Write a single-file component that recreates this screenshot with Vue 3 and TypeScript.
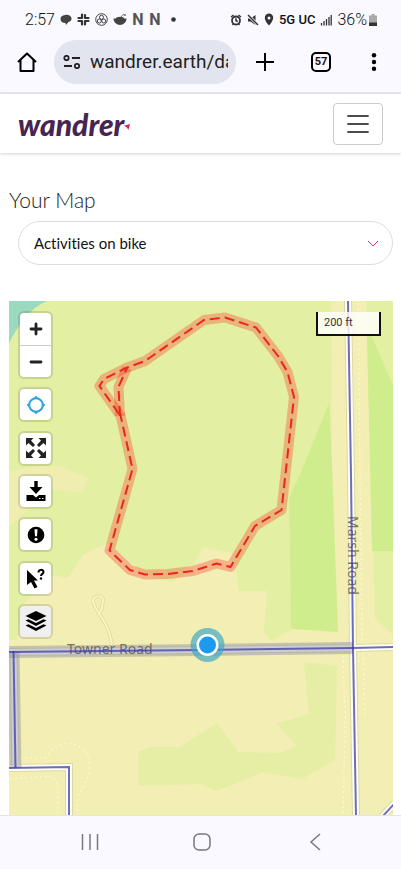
<script setup lang="ts">
import { ref } from 'vue'

interface Control {
  id: string
  label: string
}

const address = ref('wandrer.earth/dashboard')
const activity = ref('bike')
const activeControl = ref('layers')

const controls: Control[] = [
  { id: 'locate', label: 'Show my location' },
  { id: 'expand', label: 'Full screen' },
  { id: 'download', label: 'Download' },
  { id: 'report', label: 'Report a problem' },
  { id: 'query', label: 'Query the map' },
  { id: 'layers', label: 'Layers' },
]

const marsh = 'M348 301 L351 475 L353 648 L356 816'
const towner = 'M9 652 L200 650 L353 648 L394 647'
const west = 'M13.5 651 L15.5 768'
const south = 'M9 768 L69 767 L69 816'
const corner = 'M382 817 L395 803'
const roads = [marsh, towner, west, south, corner]

const route =
  'M119 414 L99.5 386 L104 379 L126 368 L145 361 L204 320 L225 317.5 L256 327.5 L278 356 L287.5 372 L294 397 L281.5 510 L255 526 L230.500 567 L216.500 563.500 L193 571 L168 574 L145 574.500 L130 570 L109.500 550.500 L132.500 469 L120 413'
const spur = 'M120 416 L118.500 387 L127 368'
</script>

<template>
  <div class="screen">
    <header class="status">
      <div class="status-left">
        <span class="clock">2:57</span>
        <svg width="12" height="12" viewBox="0 0 12 12"><path d="M5 1c3-1 6 .5 6.500 3 .4 2-1 3.500-3 4L6 11 5.500 9C2.500 9 .5 7.500.5 5S2 1.500 5 1z" fill="#444" /></svg>
        <svg width="13" height="13" viewBox="0 0 13 13" stroke="#333" stroke-width="2.200" stroke-linecap="round" fill="none"><path d="M5 1.500V5M1.500 5H5M8 2V5M8 5h3.500M5 8v3.500M1.500 8H5M8 8h3.500M8 8v3.500" /></svg>
        <svg width="13" height="13" viewBox="0 0 13 13" stroke="#444" fill="none"><circle cx="6.500" cy="6.500" r="5.800" /><circle cx="6.500" cy="4.300" r="2" /><circle cx="4.300" cy="8" r="2" /><circle cx="8.700" cy="8" r="2" /></svg>
        <svg width="14" height="13" viewBox="0 0 14 13"><path d="M.5 5.500h13c0 3.500-3 6.500-6.500 6.500s-6.500-3-6.500-6.500z" fill="#444" /><ellipse cx="7" cy="5.500" rx="4" ry="1.800" fill="#444" /><path d="M8 4l2-2.500 2 .5" stroke="#777" fill="none" /><circle cx="12" cy="2" r="1" fill="#777" /></svg>
        <span class="letter">N</span>
        <span class="letter">N</span>
        <svg width="5" height="5" viewBox="0 0 5 5"><circle cx="2.500" cy="2.500" r="2.300" fill="#333" /></svg>
      </div>
      <div class="status-right">
        <svg width="12" height="12" viewBox="0 0 12 12" fill="none" stroke="#333"><circle cx="6" cy="6.500" r="4" stroke-width="1.800" /><path d="M1 3l2.500-2M11 3L8.500 1M6 4.200v2.500l1.800.8M2.500 11l1-1M9.500 11l-1-1" stroke-width="1.500" /></svg>
        <svg width="12" height="12" viewBox="0 0 12 12"><path d="M1 4.500h2.500L8.500 1v10l-5-3.500H1z" fill="#333" /><path d="M1 1l10 10" stroke="#f9f9ff" stroke-width="3" /><path d="M1 1l10 10" stroke="#333" stroke-width="1.400" /></svg>
        <svg width="10" height="13" viewBox="0 0 10 13"><path d="M5 .5a4.200 4.200 0 0 1 4.200 4.200C9.200 8 5 12.500 5 12.500S.8 8 .8 4.700A4.200 4.200 0 0 1 5 .5zm0 2.900a1.500 1.500 0 1 0 0 3 1.500 1.500 0 0 0 0-3z" fill="#333" fill-rule="evenodd" /></svg>
        <span class="network">5G UC</span>
        <svg width="12" height="12" viewBox="0 0 12 12" stroke="#333" stroke-width="1.300"><path d="M1.500 9v2.500M4 7v4.500M6.500 5v6.500M9 3v8.500M11.200 1v10.500" /></svg>
        <span class="percent">36%</span>
        <svg width="8" height="12" viewBox="0 0 8 12"><path d="M2.500 0h3v1.500H8V12H0V1.500h2.500z" fill="#aaa" /><path d="M0 8.500h8V12H0z" fill="#333" /></svg>
      </div>
    </header>

    <div class="toolbar">
      <button class="plain" aria-label="Home">
        <svg width="20" height="20" viewBox="0 0 20 20" fill="none" stroke="#000" stroke-width="2"><path d="M1 10 10 1.500 19 10M3.500 8v11h13V8" stroke-linejoin="round" /></svg>
      </button>
      <label class="address">
        <svg width="18" height="14" viewBox="0 0 18 14" fill="none" stroke="#222" stroke-width="1.800"><circle cx="3.500" cy="3" r="2.200" /><path d="M9 3h8M1 11h8" /><circle cx="14" cy="11" r="2.200" /></svg>
        <input v-model="address" type="text" aria-label="Address" />
      </label>
      <div class="actions">
        <button class="plain" aria-label="New tab">
          <svg width="18" height="18" viewBox="0 0 18 18" stroke="#000" stroke-width="2"><path d="M0 9h18M9 0v18" /></svg>
        </button>
        <button class="tabs" aria-label="Open tabs">57</button>
        <button class="plain" aria-label="More">
          <svg width="12" height="18" viewBox="0 0 12 18"><circle cx="6" cy="2.300" r="2.200" /><circle cx="6" cy="9" r="2.200" /><circle cx="6" cy="15.700" r="2.200" /></svg>
        </button>
      </div>
    </div>

    <nav class="site">
      <a class="brand" href="#">
        <span>wandrer</span>
        <svg width="6" height="6" viewBox="0 0 7 7"><path d="M0 2 7 0 5 7 3.500 4z" fill="#d91e5b" /></svg>
      </a>
      <button class="menu" aria-label="Toggle navigation">
        <svg width="22" height="18" viewBox="0 0 22 18" stroke="#111" stroke-width="1.700" stroke-linecap="round"><path d="M1 1h20M1 9h20M1 17h20" /></svg>
      </button>
    </nav>

    <main>
      <h1><label for="activity">Your Map</label></h1>
      <div class="picker">
        <select id="activity" v-model="activity">
          <option value="bike">Activities on bike</option>
        </select>
        <svg width="12" height="7" viewBox="0 0 12 7" fill="none" stroke="#b8486c"><path d="M1 1l5 5 5-5" /></svg>
      </div>

      <section class="map" aria-label="Map">
        <svg class="canvas" viewBox="9 301 384 514" preserveAspectRatio="xMidYMid slice">
          <rect x="-600" y="0" width="1600" height="1600" fill="#f2eeb4" />
          <path d="M9 301H331L332 465 289 498 291 630 271 641 264 632 267 591H239L237 575 233 553 203 547 193 565 172 582 145 574 107 543 83 555 68 578 53 575 23 604 17 640H9z" fill="#e3efa3" />
          <path d="M9 472 30 467 60 466 88 478 83 493 50 489 9 527z" fill="#f0edb1" />
          <path d="M9 301H47C30 308 19 324 9 343z" fill="#9bdabe" />
          <path d="M329 403 300 475 289 498 291 629 338 632 332 465z" fill="#cfed8c" />
          <path d="M366 301H393V635L375 618z" fill="#e3efa3" />
          <path d="M367 335h4L393 385V551H372z" fill="#cfed8c" />
          <path d="M304 662 337 666 335 760 302 779 263 772 217 791 200 784 139 786 138 752 150 747H180L217 723 238 752 280 753 297 746 277 724 309 714z" fill="#e5eea4" />
          <g class="trail">
            <path d="M358.500 303 360 475 362 630 363 652 365 715" />
            <path d="M343 656 345 720 343 815M343 661H364" />
            <path d="M10 758H45L53 748 65 743 78 745 88 755 90 770 85 785 78 795 77 815" />
            <path d="M10 779 53 776 58 785V815" />
          </g>
          <path d="M112 645C109 626 104 622 98 612 93 604 92 600 94 598 97 595 103 596 103 600L102 608 99 614" fill="none" stroke="#ddd99c" stroke-width="3.500" />
          <path d="M112 645C109 626 104 622 98 612 93 604 92 600 94 598 97 595 103 596 103 600L102 608 99 614" fill="none" stroke="#fbf8bd" stroke-width="2" />
          <g fill="none">
            <path v-for="road in roads" :key="road" :d="road" stroke="#dcd9a6" stroke-width="8" />
            <path v-for="road in roads" :key="road" :d="road" stroke="#fffef0" stroke-width="6" />
            <path d="M9 652 200 650 353 648" stroke="#8888a0" stroke-opacity=".42" stroke-width="12" />
            <path :d="west" stroke="#8888a0" stroke-opacity=".42" stroke-width="12" />
          </g>
          <g class="label">
            <text x="67" y="654">Towner Road</text>
            <text transform="translate(348 516) rotate(90)">Marsh Road</text>
          </g>
          <g fill="none" stroke="#3c3cae" stroke-opacity=".75" stroke-width="2">
            <path v-for="road in roads" :key="road" :d="road" />
          </g>
          <g class="glow"><path :d="route" /><path :d="spur" /></g>
          <g class="dashes"><path :d="route" /><path :d="spur" /></g>
          <circle cx="207.500" cy="645" r="17" fill="#38a5c5" fill-opacity=".65" />
          <circle cx="207.500" cy="645" r="11" fill="#fff" />
          <circle cx="207.500" cy="645" r="8.500" fill="#1a9bf0" />
        </svg>

        <div class="controls">
          <div class="zoom">
            <button aria-label="Zoom in"><svg width="14" height="14" viewBox="0 0 14 14" stroke="#222" stroke-width="2.800" stroke-linecap="round"><path d="M2 7h10M7 2v10" /></svg></button>
            <button aria-label="Zoom out"><svg width="14" height="14" viewBox="0 0 14 14" stroke="#222" stroke-width="2.800" stroke-linecap="round"><path d="M2 7h10" /></svg></button>
          </div>
          <button
            v-for="control in controls"
            :key="control.id"
            class="control"
            :class="{ active: control.id === activeControl }"
            :aria-label="control.label"
            @click="activeControl = control.id"
          >
            <svg width="22" height="22" viewBox="0 0 22 22">
              <g v-if="control.id === 'locate'"><circle cx="11" cy="11" r="6.800" fill="none" stroke="#2da5d8" stroke-width="2" /><path d="M11 1.500 13.300 4.500H8.700zM11 20.500 13.300 17.500H8.700zM1.500 11 4.500 8.700v4.600zM20.500 11 17.500 8.700v4.600z" fill="#2da5d8" /></g>
              <g v-else-if="control.id === 'expand'"><path d="M1 1H8.500L6 3.500 10 8 8 10 3.500 6 1 8.500zM21 1V8.500L18.500 6 14 10 12 8 16 3.500 13.500 1zM1 21V13.500L3.500 16 8 12 10 14 6 18.500 8.500 21zM21 21H13.500L16 18.500 12 14 14 12 18.500 16 21 13.500z" fill="#222" /></g>
              <g v-else-if="control.id === 'download'"><path d="M9.300 1h3.400v6H17.500l-6.500 7-6.500-7h4.800zM1.500 15H8l3 2.500L14 15h6.500v6h-19z" /><path d="M14 18.500h1.500M17 18.500h1.500" stroke="#fff" stroke-width="1.200" /></g>
              <g v-else-if="control.id === 'report'"><circle cx="11" cy="11" r="8.300" /><path d="M9.500 5.300h3l-.5 7h-2z" fill="#fff" /><circle cx="11" cy="15.200" r="1.500" fill="#fff" /></g>
              <g v-else-if="control.id === 'query'"><path d="M2 3 13 13.500H9L12.500 20 9.500 21.500 6 15 2 18z" /><path d="M13.500 5.500c0-3.500 5-3.300 5-.6 0 2-2.500 2-2.500 4.200" fill="none" stroke="#000" stroke-width="2" /><circle cx="16" cy="11.500" r="1.200" /></g>
              <g v-else><path d="M11 1 21.500 6 11 11 .5 6z" /><path d="M.5 10.500 3.500 9.300 11 13 18.500 9.300 21.500 10.500 11 16zM.5 15.500 3.500 14.200 11 18 18.500 14.200 21.500 15.500 11 21z" /></g>
            </svg>
          </button>
        </div>
        <div class="scale">200 ft</div>
      </section>
    </main>

    <footer>
      <button class="plain" aria-label="Recent apps"><svg width="18" height="18" viewBox="0 0 18 18" stroke="#777781" stroke-width="1.500"><path d="M1.500 1v16M9 1v16M16.500 1v16" /></svg></button>
      <button class="plain" aria-label="Home screen"><svg width="18" height="18" viewBox="0 0 18 18" fill="none" stroke="#777781" stroke-width="1.500"><rect x="1" y="1" width="16" height="16" rx="5" /></svg></button>
      <button class="plain" aria-label="Back"><svg width="18" height="18" viewBox="0 0 18 18" fill="none" stroke="#777781" stroke-width="1.500"><path d="M14 1 5 9l9 8" /></svg></button>
    </footer>
  </div>
</template>

<style>
body {
  margin: 0;
  background: #fff;
}
</style>

<style scoped>
.screen {
  display: flex;
  flex-direction: column;
  min-height: 100vh;
  font-family: Lato, "Liberation Sans", sans-serif;
  color: #111;
}
svg {
  display: block;
  flex: none;
}
button {
  font: inherit;
  color: inherit;
  cursor: pointer;
}
.plain {
  display: grid;
  place-items: center;
  padding: 0;
  border: 0;
  background: none;
}
.status {
  display: flex;
  justify-content: space-between;
  height: 39px;
  padding: 0 24px 0 25px;
  background: #f9f9ff;
  font-family: Roboto, sans-serif;
  font-size: 16px;
}
.status-left,
.status-right {
  display: flex;
  align-items: center;
}
.status-left {
  gap: 5px;
}
.status-right {
  gap: 5px;
}
.clock {
  font-weight: 300;
}
.letter {
  width: 12px;
  color: #555;
  font-weight: 700;
  text-align: center;
}
.status-left > :last-child {
  margin-left: 5px;
}
.network {
  font-size: 13px;
  font-weight: 500;
}
.percent {
  font-weight: 300;
}
.status-right > :last-child {
  margin-left: -3px;
}
.toolbar {
  display: flex;
  align-items: center;
  height: 55px;
  padding: 0 21px 8px 17px;
  border-bottom: 2px solid #e7e9f0;
  background: #f9f9ff;
  box-sizing: border-box;
  font-family: Roboto, sans-serif;
}
.address {
  display: flex;
  flex: 1;
  align-items: center;
  gap: 9px;
  min-width: 0;
  height: 44px;
  margin-left: 17px;
  padding: 0 8px 0 9px;
  border-radius: 22px;
  background: #e2e5ef;
}
.address input {
  flex: 1;
  min-width: 0;
  padding: 0;
  border: 0;
  outline: 0;
  background: none;
  color: #222;
  font: 19px Roboto, sans-serif;
}
.actions {
  display: flex;
  align-items: center;
  gap: 37px;
  margin-left: 20px;
}
.tabs {
  width: 20px;
  height: 20px;
  padding: 0;
  border: 2px solid #000;
  border-radius: 5px;
  background: none;
  font-size: 11px;
  font-weight: 700;
  line-height: 16px;
}
.site {
  display: flex;
  align-items: center;
  justify-content: space-between;
  height: 59px;
  padding: 0 18px;
  background: #fff;
  box-shadow: 0 1px 3px rgba(0, 0, 0, 0.18);
}
.brand {
  display: flex;
  align-items: center;
  color: #482451;
  font-size: 30px;
  font-style: italic;
  font-weight: 900;
  line-height: 36px;
  text-decoration: none;
}
.brand svg {
  margin-top: 6px;
}
.menu {
  display: grid;
  place-items: center;
  width: 50px;
  height: 42px;
  padding: 0;
  border: 1px solid #ccc;
  border-radius: 4px;
  background: #fff;
}
main {
  display: flex;
  flex: 1;
  flex-direction: column;
  padding: 32px 8px 0 9px;
}
h1 {
  margin: 0;
  color: #222;
  font-size: 21px;
  font-weight: 300;
  line-height: 30px;
}
.picker {
  display: grid;
  align-items: center;
  margin: 6px 0 36px 9px;
}
.picker > * {
  grid-area: 1 / 1;
}
.picker svg {
  justify-self: end;
  margin-right: 14px;
  pointer-events: none;
}
select {
  width: 100%;
  height: 44px;
  padding: 0 36px 0 15px;
  border: 1px solid #ddd;
  border-radius: 22px;
  background: #fff;
  color: #111;
  font: 15px Lato, sans-serif;
  font-variant-ligatures: none;
  appearance: none;
}
.map {
  position: relative;
  display: flex;
  flex: 1;
  align-items: flex-start;
  justify-content: space-between;
  padding: 10px 12px 0 9px;
  overflow: hidden;
}
.canvas {
  position: absolute;
  inset: 0;
  width: 100%;
  height: 100%;
}
.trail {
  fill: none;
  stroke: #fbf8c6;
  stroke-width: 1.5px;
  stroke-dasharray: 2 3;
}
.label {
  fill: #55554d;
  fill-opacity: 0.8;
  font: 14px "Noto Sans", sans-serif;
}
.glow {
  fill: none;
  stroke: #f00;
  stroke-opacity: 0.25;
  stroke-width: 10px;
  stroke-linejoin: round;
}
.dashes {
  fill: none;
  stroke: #e8281a;
  stroke-width: 2px;
  stroke-dasharray: 10 5;
}
.controls {
  position: relative;
  display: flex;
  flex-direction: column;
  justify-content: space-between;
  height: 328px;
}
.zoom,
.control {
  width: 35px;
  border: 2px solid rgba(0, 0, 0, 0.12);
  border-radius: 6px;
  background: #fff;
  background-clip: padding-box;
  box-sizing: border-box;
}
.control {
  display: grid;
  place-items: center;
  height: 35px;
  padding: 0;
}
.control.active {
  background-color: #f0f0f0;
}
.zoom button {
  display: grid;
  place-items: center;
  width: 100%;
  height: 32px;
  padding: 0;
  border: 0;
  background: none;
}
.zoom button + button {
  border-top: 1px solid #ccc;
}
.scale {
  position: relative;
  width: 65px;
  height: 24px;
  margin-top: 1px;
  padding-left: 6px;
  border: 2px solid #111;
  border-top: 0;
  background: rgba(255, 255, 255, 0.8);
  box-sizing: border-box;
  color: #333;
  font: 11px/22px Roboto, sans-serif;
}
footer {
  display: grid;
  grid-template-columns: repeat(3, 1fr);
  height: 51px;
  padding: 0 30px 2px 34px;
  border-top: 1px solid #e3e3ea;
  background: #f9f9ff;
}
</style>
